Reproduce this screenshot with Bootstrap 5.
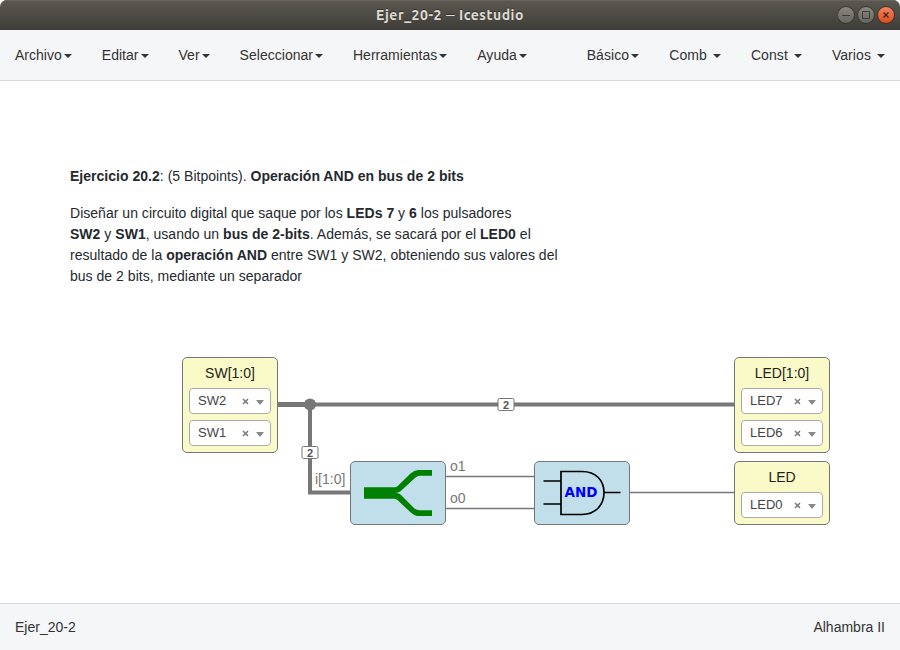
<!DOCTYPE html>
<html lang="es">
<head>
<meta charset="utf-8">
<meta name="viewport" content="width=device-width, initial-scale=1">
<title>Ejer_20-2 — Icestudio</title>
<link href="https://cdn.jsdelivr.net/npm/bootstrap@5.3.0/dist/css/bootstrap.min.css" rel="stylesheet">
<style>
body{font-family:"Liberation Sans",Arial,sans-serif;font-size:14px;line-height:20px;color:#333;background:#fff}
.titlebar{height:30px;background:linear-gradient(#5b5950,#3e3d39);border-radius:7px 7px 0 0;box-shadow:inset 0 1px #66645c;color:#dfdbd2;font:bold 14px/30px Ubuntu,"Noto Sans",sans-serif}
.win-title{letter-spacing:.5px;text-shadow:0 -1px #333}
.win-title span{font-weight:400;display:inline-block;transform:scaleX(1.2);margin:0 1px}
.win-buttons{right:5px;top:6px}
.menubar{height:51px;background:#f5f6f8;border-bottom:1px solid #d3d9dd;padding:0 15px}
.menu{gap:30px}
.menu a{color:#333;white-space:nowrap;letter-spacing:.02px}
.menu + .menu a{letter-spacing:.08px}
.menu a::after{content:"";display:inline-block;margin-left:2px;vertical-align:middle;border-top:4px solid;border-left:4px solid transparent;border-right:4px solid transparent}
.menu a.loose::after{margin-left:6px}
.statusbar{height:47px;background:#f4f6f8;border-top:1px solid #d3d9dd;padding:0 15px}
.note{left:70px;top:85px;font-size:14px;line-height:21px;color:#24292e;letter-spacing:.024px}
.note p{margin:0 0 16px}
.note span{display:block;white-space:nowrap}
.node{width:96px;border:1px solid #777;border-radius:5px}
.io{background:#fafac8;padding:5px 6px 6px}
.io h6{font-size:14px;line-height:20px;font-weight:400;color:#222;margin:0 0 5px;text-align:center}
.pick{height:26px;border:1px solid #aaa;border-radius:4px;background:#fff;padding:0 6px 0 8px;font-size:13px;color:#444}
.pick + .pick{margin-top:6px}
.pick svg{margin:0 7px 0 auto}
.pick b{border-top:5px solid #888;border-left:4px solid transparent;border-right:4px solid transparent;margin-top:3px}
.wires{left:0;top:0}
.sw{left:182px;top:276px}
.led2{left:734px;top:276px}
.led1{left:734px;top:380px}
.wires text{font-family:"Liberation Sans",Arial,sans-serif}
.wires .gate-name{font-family:"DejaVu Sans",sans-serif}
</style>
<script src="https://cdn.jsdelivr.net/npm/bootstrap@5.3.0/dist/js/bootstrap.bundle.min.js"></script>
</head>
<body>
<div class="d-flex flex-column vh-100 overflow-hidden">
  <header class="titlebar position-relative text-center flex-shrink-0">
    <div class="win-title">Ejer_20-2 <span>–</span> Icestudio</div>
    <svg class="win-buttons position-absolute" width="57" height="19" viewBox="0 0 57 19" fill="none">
      <defs>
        <linearGradient id="grey" x2="0" y2="1"><stop stop-color="#8b8981"/><stop offset="1" stop-color="#66655e"/></linearGradient>
        <linearGradient id="red" x2="0" y2="1"><stop stop-color="#f58463"/><stop offset="1" stop-color="#df4a16"/></linearGradient>
      </defs>
      <g stroke="#35342f"><circle cx="8" cy="9" r="8.5" fill="url(#grey)"/><circle cx="28" cy="9" r="8.5" fill="url(#grey)"/><circle cx="48" cy="9" r="8.5" fill="url(#red)"/></g>
      <path d="M4 9.500h8M24.500 5.500h7v7h-7z" stroke="#3c3b37"/>
      <path d="M45.500 6.500l5 5M50.500 6.500l-5 5" stroke="#3c2a20" stroke-width="1.300"/>
    </svg>
  </header>
  <nav class="menubar d-flex justify-content-between align-items-center flex-shrink-0">
    <div class="menu d-flex">
      <a class="text-decoration-none">Archivo</a><a class="text-decoration-none">Editar</a><a class="text-decoration-none">Ver</a><a class="text-decoration-none">Seleccionar</a><a class="text-decoration-none">Herramientas</a><a class="text-decoration-none">Ayuda</a>
    </div>
    <div class="menu d-flex">
      <a class="text-decoration-none">Básico</a><a class="text-decoration-none loose">Comb</a><a class="text-decoration-none loose">Const</a><a class="text-decoration-none loose">Varios</a>
    </div>
  </nav>
  <main class="position-relative flex-grow-1">
    <div class="note position-absolute">
      <p><span><strong>Ejercicio 20.2</strong>: (5 Bitpoints). <strong>Operación AND en bus de 2 bits</strong></span></p>
      <p class="mb-0"><span>Diseñar un circuito digital que saque por los <strong>LEDs 7</strong> y <strong>6</strong> los pulsadores</span>
      <span><strong>SW2</strong> y <strong>SW1</strong>, usando un <strong>bus de 2-bits</strong>. Además, se sacará por el <strong>LED0</strong> el</span>
      <span>resultado de la <strong>operación AND</strong> entre SW1 y SW2, obteniendo sus valores del</span>
      <span>bus de 2 bits, mediante un separador</span></p>
    </div>
    <!-- Wires, logic blocks and bus labels -->
    <svg class="wires position-absolute" width="900" height="522" viewBox="0 81 900 522" fill="none">
      <g stroke="#777">
        <path d="M278 404.500H734M310 404.500V492.500H350" stroke-width="4"/>
        <path d="M278 404.500H310" stroke-width="5"/>
        <path d="M446 476.500H534M446 508.500H534M630 492.500H734" stroke-width="1.400"/>
      </g>
      <circle cx="310" cy="404.500" r="6" fill="#777"/>
      <g fill="#fff" stroke="#777"><rect x="498" y="398.500" width="16" height="12" rx="1.500"/><rect x="302" y="446.500" width="16" height="12" rx="1.500"/></g>
      <g font-size="11" font-weight="700" fill="#555" text-anchor="middle"><text x="506" y="409">2</text><text x="310" y="457">2</text></g>
      <g font-size="14" fill="#777"><text x="315" y="484">i[1:0]</text><text x="450" y="471">o1</text><text x="450" y="503">o0</text></g>
      <g fill="#c0dfeb" stroke="#777"><rect x="350.500" y="461.500" width="95" height="63" rx="4.500"/><rect x="534.500" y="461.500" width="95" height="63" rx="4.500"/></g>
      <path d="M364 487.200H394.500Q396.500 487.200 398 485.700L410.500 473.500Q414.300 470 418 470H432V475.800H420Q417.500 475.800 415.500 477.600L400.500 491.200Q399.300 492.200 396 492.800Q399.300 493.400 400.500 494.600L414.500 508.500Q416.800 510.300 419.500 510.300H432V516H418Q414.300 516 410.500 512.300L398 500.500Q396.300 498.800 394.500 498.800H364Z" fill="green"/>
      <path d="M561 471.500H582C596 471.500 604 480.500 604 492.500S596 514.500 582 514.500H561ZM543.500 481H561M543.500 504H561M604 492.500H620.500" stroke="#000" stroke-width="1.700"/>
      <text class="gate-name" x="564.500" y="497" font-size="13.500" font-weight="700" fill="#00f" textLength="33" lengthAdjust="spacingAndGlyphs">AND</text>
    </svg>
    <section class="node io sw position-absolute">
      <h6>SW[1:0]</h6>
      <div class="pick d-flex align-items-center">SW2<svg width="7" height="7"><path d="M1 1l5 5M6 1L1 6" stroke="#777" stroke-width="1.500"/></svg><b></b></div>
      <div class="pick d-flex align-items-center">SW1<svg width="7" height="7"><path d="M1 1l5 5M6 1L1 6" stroke="#777" stroke-width="1.500"/></svg><b></b></div>
    </section>
    <section class="node io led2 position-absolute">
      <h6>LED[1:0]</h6>
      <div class="pick d-flex align-items-center">LED7<svg width="7" height="7"><path d="M1 1l5 5M6 1L1 6" stroke="#777" stroke-width="1.500"/></svg><b></b></div>
      <div class="pick d-flex align-items-center">LED6<svg width="7" height="7"><path d="M1 1l5 5M6 1L1 6" stroke="#777" stroke-width="1.500"/></svg><b></b></div>
    </section>
    <section class="node io led1 position-absolute">
      <h6>LED</h6>
      <div class="pick d-flex align-items-center">LED0<svg width="7" height="7"><path d="M1 1l5 5M6 1L1 6" stroke="#777" stroke-width="1.500"/></svg><b></b></div>
    </section>
  </main>
  <footer class="statusbar d-flex justify-content-between align-items-center flex-shrink-0">
    <span>Ejer_20-2</span><span>Alhambra II</span>
  </footer>
</div>
</body>
</html>
